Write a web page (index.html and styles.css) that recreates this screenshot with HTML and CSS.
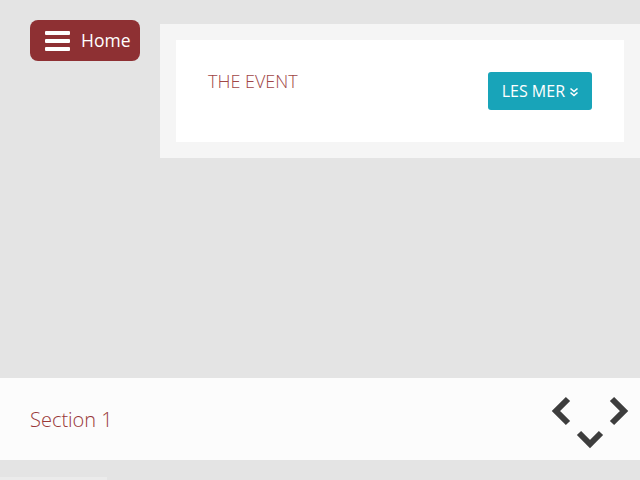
FILE: index.html
```html
<!DOCTYPE html>
<html>
<head>
<meta charset="utf-8">
<link rel="stylesheet" href="styles.css">
</head>
<body>
<div class="top">
  <a class="home" href="#">
    <span class="burger"><i></i><i></i><i></i></span>
    <span class="home-label">Home</span>
  </a>
  <div class="panel">
    <div class="card">
      <h2 class="title">THE EVENT</h2>
      <a class="more" href="#">LES MER
        <svg class="dbl" width="10" height="10" viewBox="0 0 10 10"><polyline points="1.5,1.5 5,4.5 8.5,1.5" fill="none" stroke="#fff" stroke-width="1.6"/><polyline points="1.5,5.5 5,8.5 8.5,5.5" fill="none" stroke="#fff" stroke-width="1.6"/></svg>
      </a>
    </div>
  </div>
</div>
<div class="section">
  <span class="section-title">Section 1</span>
  <svg class="nav" width="80" height="60" viewBox="0 0 80 60">
    <polyline points="18,7 6,19 18,31" fill="none" stroke="#3d3d3d" stroke-width="6"/>
    <polyline points="62,7 74,19 62,31" fill="none" stroke="#3d3d3d" stroke-width="6"/>
    <polyline points="29,41 40,52 51,41" fill="none" stroke="#3d3d3d" stroke-width="6"/>
  </svg>
</div>
<div class="strip"></div>
</body>
</html>
```
FILE: styles.css
```css
html, body {
  margin: 0;
  padding: 0;
}
body {
  background: #e4e4e4;
  font-family: "Open Sans", "Liberation Sans", sans-serif;
  width: 640px;
  height: 480px;
  overflow: hidden;
}
.top {
  display: flex;
  align-items: flex-start;
  padding-top: 20px;
}
.home {
  display: flex;
  align-items: center;
  gap: 11px;
  margin-left: 30px;
  height: 41px;
  width: 110px;
  box-sizing: border-box;
  padding-left: 15px;
  background: #8e3033;
  border-radius: 8px;
  color: #fff;
  text-decoration: none;
}
.burger {
  display: flex;
  flex-direction: column;
  gap: 4px;
  width: 25px;
  margin-top: 1px;
}
.burger i {
  display: block;
  height: 4px;
  background: #fff;
  border-radius: 1px;
}
.home-label {
  font-size: 17.5px;
  line-height: 1;
}
.panel {
  flex: 1;
  margin-left: 20px;
  margin-top: 4px;
  padding: 16px;
  background: #f5f5f5;
}
.card {
  display: flex;
  justify-content: space-between;
  align-items: flex-start;
  background: #fff;
  padding: 32px;
}
.title {
  margin: 0;
  font-size: 18px;
  font-weight: 300;
  line-height: 18px;
  color: #a04646;
}
.more {
  display: flex;
  align-items: center;
  gap: 4px;
  height: 38px;
  box-sizing: border-box;
  padding: 0 13px 0 14px;
  background: #18a4b9;
  border-radius: 3px;
  color: #fff;
  text-decoration: none;
  font-size: 16px;
}
.dbl {
  margin-top: 1px;
}
.section {
  display: flex;
  justify-content: space-between;
  align-items: center;
  margin-top: 220px;
  height: 82px;
  background: #fcfcfc;
  padding: 0 10px 0 30px;
}
.section-title {
  font-size: 20px;
  font-weight: 300;
  color: #993838;
}
.nav {
  align-self: flex-start;
  margin-top: 14px;
}
.strip {
  margin-top: 17px;
  width: 107px;
  height: 3px;
  background: #ebebeb;
}
```
